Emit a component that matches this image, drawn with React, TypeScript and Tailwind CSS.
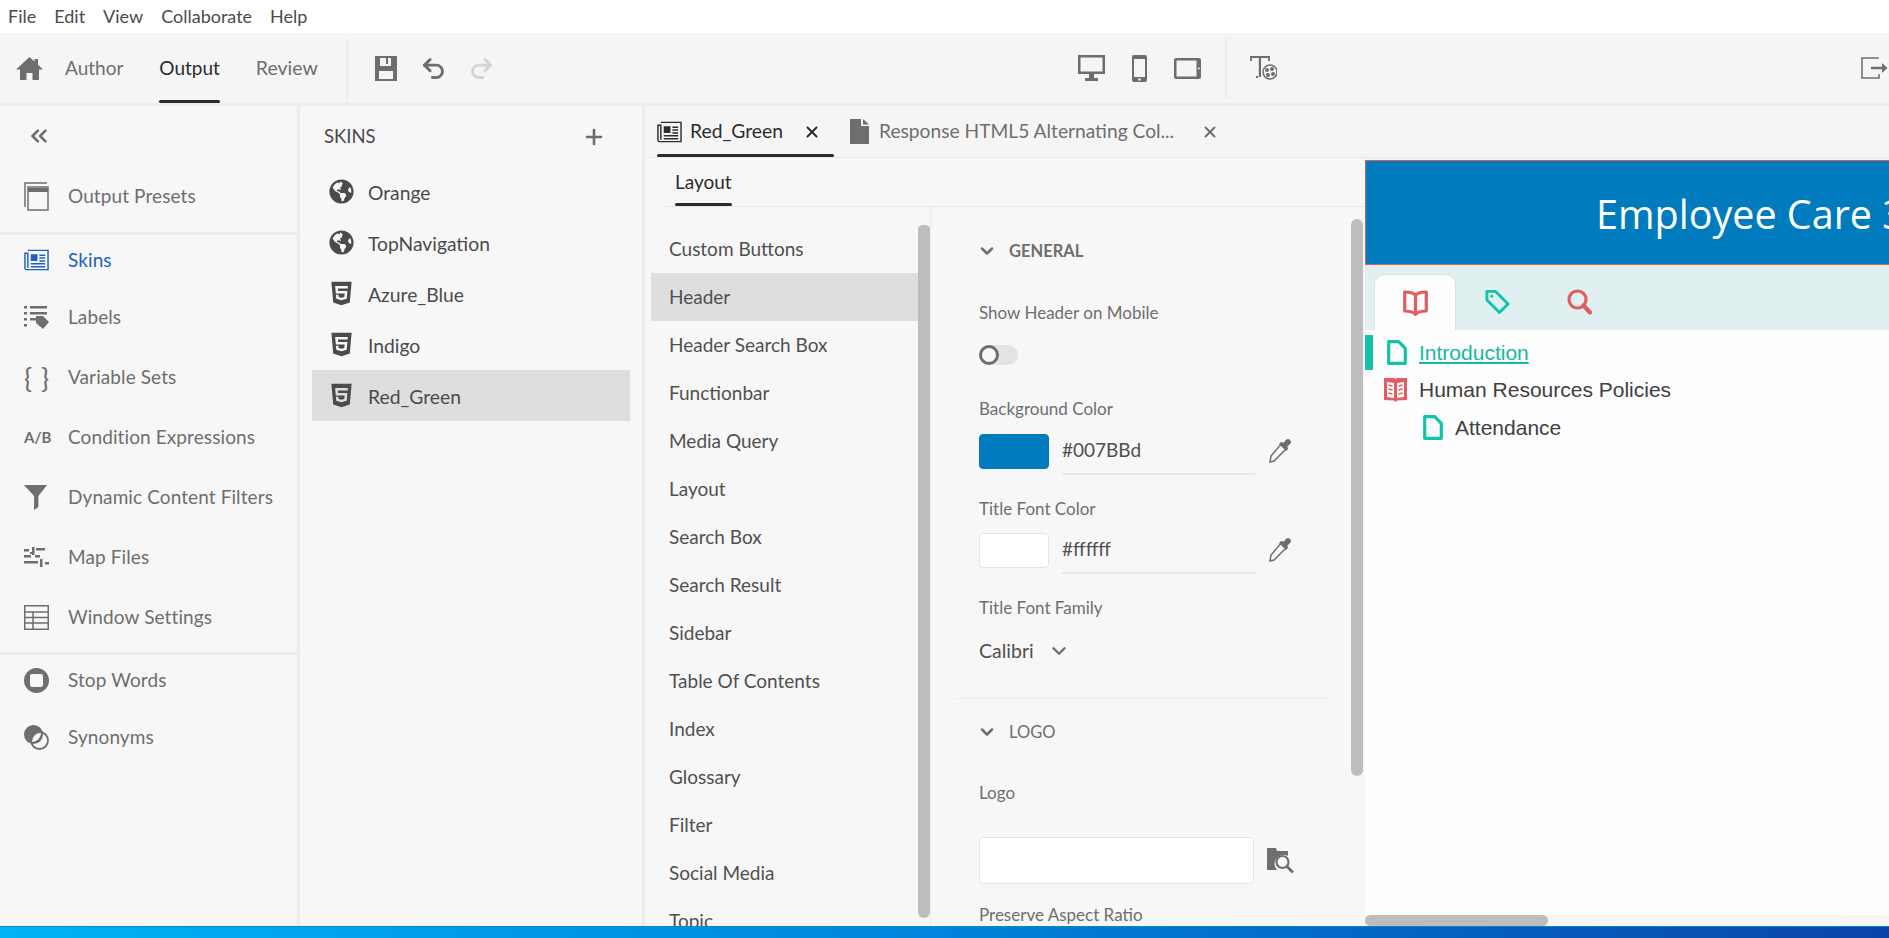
import type { ReactNode } from 'react'
import { ChevronDown, ChevronsLeft, Plus, Redo2, Undo2, X } from 'lucide-react'
import { FaGlobeAmericas, FaHtml5 } from 'react-icons/fa'

const menus = ['File', 'Edit', 'View', 'Collaborate', 'Help']
const skins = ['Orange', 'TopNavigation', 'Azure_Blue', 'Indigo', 'Red_Green']
const sections = [
  'Custom Buttons',
  'Header',
  'Header Search Box',
  'Functionbar',
  'Media Query',
  'Layout',
  'Search Box',
  'Search Result',
  'Sidebar',
  'Table Of Contents',
  'Index',
  'Glossary',
  'Filter',
  'Social Media',
  'Topic',
]

function HomeIcon() {
  return (
    <svg viewBox="0 0 27 23" className="w-[27px] h-[23px] fill-[#6e6e6e]">
      <path d="M13.5 0 0 12.5h4V23h6.5v-7h6v7H23V12.5h4l-5-4.7V2h-3.5v2.5z" />
    </svg>
  )
}

function SaveIcon() {
  return (
    <svg viewBox="0 0 22 25" className="w-[22px] h-[25px] fill-[#6e6e6e]">
      <path
        fillRule="evenodd"
        d="M0 0h22v25H0zM5 2v8h11V2h-3v6h-2V2zM4 15v8h14v-8z"
      />
    </svg>
  )
}

function PresetsIcon() {
  return (
    <svg viewBox="0 0 25 29" className="w-[25px] h-[29px] fill-none stroke-[#6e6e6e]">
      <path d="M1 25V1h22" strokeWidth="1.5" />
      <rect x="4" y="5" width="20" height="23" strokeWidth="1.5" />
      <path d="M4 8h20" strokeWidth="4" />
    </svg>
  )
}

function NewsIcon({ color }: { color: string }) {
  return (
    <svg viewBox="0 0 26 22" className="w-[25px] h-[22px]" fill="none" stroke={color}>
      <path d="M4 1h21v20H2.5A1.5 1.5 0 0 1 1 19.5V4h3v15" strokeWidth="1.5" />
      <rect x="7" y="5" width="7" height="7" fill={color} stroke="none" />
      <path d="M16 6h6M16 9h6M16 12h6M7 15h15M7 18h15" strokeWidth="1.6" />
    </svg>
  )
}

function LabelsIcon() {
  return (
    <svg viewBox="0 0 25 24" className="w-[25px] h-[24px] fill-[#6e6e6e]">
      <path d="M0 1h3v2.500H0zM6 1h17v2.500H6zM0 7h3v2.500H0zM6 7h17v2.500H6zM0 13h3v2.500H0zM6 13h7v2.500H6zM0 19h3v2.500H0z" />
      <path d="M12 11h7l6 6-6 7-7-6z" />
    </svg>
  )
}

function FilterIcon() {
  return (
    <svg viewBox="0 0 24 26" className="w-[23px] h-[25px] fill-[#6e6e6e]">
      <path d="M0 0h24l-9 11.500V23l-4.500 3V11.500z" />
    </svg>
  )
}

function MapIcon() {
  return (
    <svg viewBox="0 0 25 20" className="w-[25px] h-[20px] fill-[#6e6e6e]">
      <path d="M0 2h5v2.500H0zM8 0h2.500v8H8zM12 1h9v2.500h-9zM0 8h7v2.500H0zM11 8h5v2.500h-5zM0 14h14v2.500H0zM16 12h2.500v8H16zM21 15h4v2.500h-4zM6 5h2v2H6z" />
    </svg>
  )
}

function GridIcon() {
  return (
    <svg viewBox="0 0 25 25" className="w-[25px] h-[25px] fill-none stroke-[#6e6e6e]">
      <rect x="0.75" y="0.75" width="23.5" height="23.5" strokeWidth="1.5" />
      <path d="M1 7h23M1 12.500h23M1 18h23M9 7v17" strokeWidth="1.5" />
    </svg>
  )
}

function StopIcon() {
  return (
    <svg viewBox="0 0 25 25" className="w-[25px] h-[25px] fill-[#6e6e6e]">
      <path
        fillRule="evenodd"
        d="M12.500 0a12.500 12.500 0 1 1 0 25 12.500 12.500 0 0 1 0-25zM8 6a2 2 0 0 0-2 2v9a2 2 0 0 0 2 2h9a2 2 0 0 0 2-2V8a2 2 0 0 0-2-2z"
      />
    </svg>
  )
}

function SynonymsIcon() {
  return (
    <svg viewBox="0 0 25 25" className="w-[25px] h-[25px]">
      <circle cx="9.500" cy="9.500" r="9.500" fill="#6e6e6e" />
      <circle cx="15.500" cy="15.500" r="8.500" fill="none" stroke="#6e6e6e" strokeWidth="1.800" />
      <path d="M8 17a8.500 8.500 0 0 1 9-9 9 9 0 0 1-9 9z" fill="#f7f7f7" />
    </svg>
  )
}

function DocIcon() {
  return (
    <svg viewBox="0 0 19 25" className="w-[19px] h-[25px] fill-[#6e6e6e]">
      <path d="M0 0h11v7h8v18H0zM13 0l6 5.500h-6z" />
    </svg>
  )
}

function DesktopIcon() {
  return (
    <svg viewBox="0 0 27 26" className="w-[27px] h-[26px] fill-[#6e6e6e]">
      <path fillRule="evenodd" d="M0 0h27v19H0zM2.500 2.500v14h22v-14zM11 19h5v4h4v3H7v-3h4z" />
    </svg>
  )
}

function PhoneIcon() {
  return (
    <svg viewBox="0 0 15 27" className="w-[15px] h-[27px] fill-[#6e6e6e]">
      <path
        fillRule="evenodd"
        d="M2 0h11a2 2 0 0 1 2 2v23a2 2 0 0 1-2 2H2a2 2 0 0 1-2-2V2a2 2 0 0 1 2-2zM2 4v18h11V4zM7.500 23.200a1.300 1.300 0 1 0 0 2.600 1.300 1.300 0 0 0 0-2.600z"
      />
    </svg>
  )
}

function TabletIcon() {
  return (
    <svg viewBox="0 0 27 21" className="w-[27px] h-[21px] fill-[#6e6e6e]">
      <path
        fillRule="evenodd"
        d="M2 0h23a2 2 0 0 1 2 2v17a2 2 0 0 1-2 2H2a2 2 0 0 1-2-2V2a2 2 0 0 1 2-2zM2.500 2.500v16h20v-16zM24.800 9.500a1 1 0 1 0 0 2 1 1 0 0 0 0-2z"
      />
    </svg>
  )
}

function ThemeIcon() {
  return (
    <svg viewBox="0 0 27 24" className="w-[27px] h-[24px]">
      <path d="M0 0h20v5h-1.800V2H11v19H8.800V2H1.800v3H0z" fill="#6e6e6e" />
      <circle cx="20" cy="16" r="7" fill="none" stroke="#6e6e6e" strokeWidth="1.500" />
      <circle cx="17" cy="14" r="2" fill="#6e6e6e" />
      <circle cx="22" cy="13" r="2" fill="#6e6e6e" />
      <circle cx="18" cy="19" r="2" fill="#6e6e6e" />
      <circle cx="23" cy="18" r="2" fill="#6e6e6e" />
      <rect x="6" y="20" width="2" height="2" fill="#6e6e6e" />
    </svg>
  )
}

function ExportIcon() {
  return (
    <svg viewBox="0 0 27 22" className="w-[27px] h-[22px] fill-none stroke-[#6e6e6e]">
      <path d="M18 1H1v20h17v-4" strokeWidth="1.500" />
      <path d="M10 11h14" strokeWidth="2.500" />
      <path d="M21 6l5.500 5-5.500 5z" fill="#6e6e6e" stroke="none" />
    </svg>
  )
}

function DropperIcon() {
  return (
    <svg viewBox="0 0 26 27" className="w-[26px] h-[27px]">
      <path d="M16 5l5 5L8 23l-4 1 1-6z" fill="none" stroke="#6e6e6e" strokeWidth="1.500" />
      <path d="M13 6l7 7 2-2-1-2 3-3a2.500 2.500 0 0 0-4-4l-3 3-2-1z" fill="#6e6e6e" />
    </svg>
  )
}

function FolderSearchIcon() {
  return (
    <svg viewBox="0 0 27 26" className="w-[27px] h-[26px]">
      <path d="M0 0h9l1 3h11v5a9 9 0 0 0-11 14H0z" fill="#6e6e6e" />
      <circle cx="15.500" cy="14" r="6" fill="none" stroke="#6e6e6e" strokeWidth="2.200" />
      <path d="M20 18.500l6 6" stroke="#6e6e6e" strokeWidth="2.800" />
    </svg>
  )
}

function TocDoc({ className }: { className?: string }) {
  return (
    <svg viewBox="0 0 20 25" className={`w-[20px] h-[25px] fill-none stroke-[#14c2ac] ${className ?? ''}`}>
      <path d="M1.700 1.700h10l6.600 6.600v15h-16.600z" strokeWidth="3.200" strokeLinejoin="round" />
    </svg>
  )
}

function BookOpenIcon() {
  return (
    <svg viewBox="0 0 25 26" className="w-[25px] h-[26px] fill-none stroke-[#e05e63]">
      <path
        d="M12.500 5C10 2.500 6 2 1.700 2v19c4 0 8 .5 10.800 3.300C15.300 21.500 19 21 23.300 21V2C19 2 15 2.500 12.500 5zM12.500 5v19"
        strokeWidth="3.200"
        strokeLinejoin="round"
      />
    </svg>
  )
}

function TagIcon() {
  return (
    <svg viewBox="0 0 26 26" className="w-[25px] h-[26px] fill-none stroke-[#14c2ac]">
      <path d="M2 2h9l13 13-9 9L2 11z" strokeWidth="3" strokeLinejoin="round" />
      <circle cx="7" cy="7" r="1.500" fill="#14c2ac" stroke="none" />
    </svg>
  )
}

function SearchIcon() {
  return (
    <svg viewBox="0 0 25 26" className="w-[25px] h-[26px] fill-none stroke-[#e05e63]">
      <circle cx="10.500" cy="10.500" r="8.500" strokeWidth="3.200" />
      <path d="M16.500 16.500l6.500 7" strokeWidth="4.200" strokeLinecap="round" />
    </svg>
  )
}

function FilledBookIcon() {
  return (
    <svg viewBox="0 0 23 24" className="w-[23px] h-[24px]">
      <path
        fillRule="evenodd"
        d="M0 0h10l1.500 1L13 0h10v22l-10 .5-1.500 1.500-1.500-1.500L0 22zM3 4v15l7 1V5zM13 5v15l7-1V4z"
        fill="#e05e63"
      />
      <path d="M4.500 7l4 1M4.500 11l4 1M4.500 15l4 1M18.500 7l-4 1M18.500 11l-4 1M18.500 15l-4 1" stroke="#e05e63" strokeWidth="1.500" />
    </svg>
  )
}

function NavRow({
  icon,
  label,
  height,
  active,
}: {
  icon: ReactNode
  label: string
  height: string
  active?: boolean
}) {
  return (
    <div className={`flex items-center ${height}`}>
      <div className="w-[68px] pl-[24px] shrink-0 flex items-center">{icon}</div>
      <span className={`pt-[1px] text-[19px] tracking-[0.1px] ${active ? 'text-[#1e5fbf]' : 'text-[#6e6e6e]'}`}>{label}</span>
    </div>
  )
}

function Divider() {
  return <div className="h-[3px] bg-[#ececec]" />
}

function FieldLabel({ children, className }: { children: ReactNode; className: string }) {
  return <div className={`h-[24px] flex items-center text-[17px] text-[#6e6e6e] ${className}`}>{children}</div>
}

function SectionTitle({ children, bold, className }: { children: ReactNode; bold?: boolean; className: string }) {
  return (
    <div className={`h-[20px] flex items-center text-[#6e6e6e] ${className}`}>
      <ChevronDown size={20} strokeWidth={3} className="-ml-[2px] mr-[12px]" />
      <span className={`text-[16.5px] ${bold ? 'font-bold' : ''}`}>{children}</span>
    </div>
  )
}

function ColorField({ value, swatch, className }: { value: string; swatch: string; className: string }) {
  return (
    <div className={`flex items-start ${className}`}>
      <div className={`w-[70px] h-[35px] rounded-[4px] border ${swatch}`} />
      <div className="ml-[13px] w-[193px] h-[41px] pb-[7px] border-b-2 border-[#e8e8e8] flex items-center text-[19px] text-[#505050]">
        {value}
      </div>
      <div className="ml-[11px] mt-[4px]">
        <DropperIcon />
      </div>
    </div>
  )
}

export default function App() {
  return (
    <div className="w-full h-screen flex flex-col overflow-hidden bg-[#f7f7f7] font-['Lato',sans-serif]">
      <div className="h-[33px] bg-white flex items-center pl-[8px] gap-[18px] text-[18px] text-[#4b4b4b] shrink-0">
        {menus.map(m => (
          <span key={m}>{m}</span>
        ))}
      </div>

      <div className="h-[70px] bg-[#f5f5f5] flex items-center shrink-0 relative">
        <div className="pl-[16px] pr-[22px]">
          <HomeIcon />
        </div>
        <span className="text-[19px] text-[#6e6e6e]">Author</span>
        <div className="relative ml-[36px] h-full flex items-center text-[19px] text-[#2c2c2c]">
          Output
          <div className="absolute left-0 right-0 bottom-0 h-[3px] rounded-sm bg-[#2c2c2c]" />
        </div>
        <span className="ml-[36px] text-[19.5px] text-[#6e6e6e]">Review</span>
        <div className="ml-[28px] w-[2px] h-[64px] mt-[6px] bg-[#ebebeb]" />
        <div className="ml-[27px]">
          <SaveIcon />
        </div>
        <Undo2 size={27} strokeWidth={2.6} className="ml-[23px] text-[#6e6e6e]" />
        <Redo2 size={27} strokeWidth={2.6} className="ml-[21px] text-[#d4d4d4]" />
        <div className="ml-[583px]">
          <DesktopIcon />
        </div>
        <div className="ml-[27px]">
          <PhoneIcon />
        </div>
        <div className="ml-[27px]">
          <TabletIcon />
        </div>
        <div className="ml-[24px] w-[2px] h-[60px] bg-[#ebebeb]" />
        <div className="ml-[23px]">
          <ThemeIcon />
        </div>
        <div className="ml-auto mr-[1px]">
          <ExportIcon />
        </div>
      </div>
      <Divider />

      <div className="flex-1 min-h-0 flex">
        <div className="w-[300px] shrink-0 border-r-[3px] border-[#ececec]">
          <div className="h-[60px] flex items-center pl-[26px] text-[#6e6e6e]">
            <ChevronsLeft size={26} strokeWidth={2.4} />
          </div>
          <NavRow icon={<PresetsIcon />} label="Output Presets" height="h-[60px]" />
          <div className="mt-[6px]">
            <Divider />
          </div>
          <NavRow icon={<NewsIcon color="#1e5fbf" />} label="Skins" height="h-[50px] mb-[2px]" active />
          <NavRow icon={<LabelsIcon />} label="Labels" height="h-[60px]" />
          <NavRow
            icon={<span className="text-[27px] leading-none tracking-[1px] text-[#6e6e6e]">{'{ }'}</span>}
            label="Variable Sets"
            height="h-[60px]"
          />
          <NavRow
            icon={<span className="text-[15px] font-bold text-[#6e6e6e]">A/B</span>}
            label="Condition Expressions"
            height="h-[60px]"
          />
          <NavRow icon={<FilterIcon />} label="Dynamic Content Filters" height="h-[60px]" />
          <NavRow icon={<MapIcon />} label="Map Files" height="h-[60px]" />
          <NavRow icon={<GridIcon />} label="Window Settings" height="h-[60px]" />
          <div className="mt-[5px]">
            <Divider />
          </div>
          <NavRow icon={<StopIcon />} label="Stop Words" height="h-[50px]" />
          <NavRow icon={<SynonymsIcon />} label="Synonyms" height="h-[64px]" />
        </div>

        <div className="w-[345px] shrink-0 border-r-[3px] border-[#ececec]">
          <div className="h-[60px] pt-[2px] flex items-center justify-between pl-[24px] pr-[36px] text-[#4b4b4b]">
            <span className="text-[18.5px]">SKINS</span>
            <Plus size={24} strokeWidth={2.6} className="text-[#6e6e6e]" />
          </div>
          {skins.map((s, i) => (
            <div
              key={s}
              className={`ml-[12px] w-[318px] h-[51px] flex items-center pl-[17px] ${s === 'Red_Green' ? 'bg-[#dedede]' : ''}`}
            >
              <div className="w-[39px] shrink-0 text-[#4b4b4b]">
                {i < 2 ? <FaGlobeAmericas size={25} /> : <FaHtml5 size={27} className="-ml-[1px]" />}
              </div>
              <span className="pt-[3px] text-[19.3px] text-[#4b4b4b]">{s}</span>
            </div>
          ))}
        </div>

        <div className="flex-1 min-w-0 flex flex-col">
          <div className="h-[52px] border-b border-[#e8e8e8] flex shrink-0 pl-[12px] bg-[#f5f5f5]">
            <div className="relative w-[177px] flex items-center text-[#2c2c2c]">
              <NewsIcon color="#2c2c2c" />
              <span className="ml-[8px] text-[19.3px]">Red_Green</span>
              <X size={18} strokeWidth={2.6} className="ml-[20px]" />
              <div className="absolute left-0 right-0 bottom-0 h-[3px] rounded-sm bg-[#2c2c2c]" />
            </div>
            <div className="ml-[16px] flex items-center text-[#6e6e6e]">
              <DocIcon />
              <span className="ml-[10px] w-[296px] text-[19.2px] whitespace-nowrap">
                Response HTML5 Alternating Col...
              </span>
              <X size={18} strokeWidth={2.6} className="ml-[26px]" />
            </div>
          </div>

          <div className="flex-1 min-h-0 flex">
            <div className="w-[720px] shrink-0 flex flex-col">
              <div className="h-[49px] ml-[18px] border-b border-[#e8e8e8] pl-[12px] shrink-0">
                <div className="relative w-fit h-full flex items-center text-[19px] text-[#2c2c2c]">
                  Layout
                  <div className="absolute left-0 right-0 bottom-0 h-[3px] rounded-sm bg-[#2c2c2c]" />
                </div>
              </div>

              <div className="flex-1 min-h-0 flex overflow-hidden">
                <div className="w-[273px] pl-[6px] pt-[18px] shrink-0">
                  {sections.map(s => (
                    <div
                      key={s}
                      className={`h-[48px] flex items-center pl-[18px] text-[19px] text-[#505050] ${s === 'Header' ? 'bg-[#dedede]' : ''}`}
                    >
                      {s}
                    </div>
                  ))}
                </div>
                <div className="w-[12px] h-[693px] mt-[18px] shrink-0 rounded-t-[6px] rounded-b-[8px] bg-[#bdbdbd]" />
                <div className="flex-1 min-w-0 border-l border-[#ececec] pl-[48px] relative">
                  <SectionTitle bold className="mt-[34px]">GENERAL</SectionTitle>
                  <FieldLabel className="mt-[40px]">Show Header on Mobile</FieldLabel>
                  <div className="mt-[20px] w-[39px] h-[20px] rounded-full bg-[#e3e3e3] relative">
                    <div className="w-[20px] h-[20px] rounded-full border-[3px] border-[#6e6e6e] bg-[#f7f7f7]" />
                  </div>
                  <FieldLabel className="mt-[32px]">Background Color</FieldLabel>
                  <ColorField value="#007BBd" swatch="bg-[#007bbd] border-[#007bbd]" className="mt-[13px]" />
                  <FieldLabel className="mt-[22px]">Title Font Color</FieldLabel>
                  <ColorField value="#ffffff" swatch="bg-white border-[#e4e4e4]" className="mt-[12px]" />
                  <FieldLabel className="mt-[22px]">Title Font Family</FieldLabel>
                  <div className="mt-[19px] h-[24px] flex items-center text-[19.5px] text-[#505050]">
                    Calibri
                    <ChevronDown size={22} strokeWidth={2.6} className="ml-[14px] text-[#6e6e6e]" />
                  </div>
                  <div className="mt-[35px] -ml-[24px] w-[372px] h-px bg-[#ebebeb]" />
                  <SectionTitle className="mt-[23px]">LOGO</SectionTitle>
                  <FieldLabel className="mt-[39px]">Logo</FieldLabel>
                  <div className="mt-[32px] flex items-center">
                    <div className="w-[275px] h-[47px] rounded-[4px] border border-[#e4e4e4] bg-white" />
                    <div className="ml-[13px]">
                      <FolderSearchIcon />
                    </div>
                  </div>
                  <FieldLabel className="mt-[19px]">Preserve Aspect Ratio</FieldLabel>
                  <div className="absolute right-[2px] top-[12px] w-[12px] h-[557px] rounded-[6px] bg-[#bdbdbd]" />
                </div>
              </div>
            </div>

            <div className="flex-1 min-w-0 bg-[#fdfdfd] flex flex-col relative overflow-hidden">
              <div className="h-[2px] bg-[#f5f5f5] shrink-0" />
              <div className="h-[105px] shrink-0 bg-[#007bbd] border-y border-l border-[#d9605a] pl-[230px] pt-[5px] flex items-center overflow-hidden">
                <span className="text-[39.5px] text-white whitespace-nowrap font-['Open_Sans',sans-serif]">
                  Employee Care 3.0
                </span>
              </div>
              <div className="h-[65px] shrink-0 bg-[#e0f0f0] flex items-end pl-[9px]">
                <div className="w-[82px] h-[56px] bg-[#fdfdfd] border border-b-0 border-[#d8e2e2] rounded-t-[10px] flex items-center justify-center">
                  <BookOpenIcon />
                </div>
                <div className="w-[82px] h-[56px] flex items-center justify-center">
                  <TagIcon />
                </div>
                <div className="w-[82px] h-[56px] flex items-center justify-center">
                  <SearchIcon />
                </div>
              </div>
              <div className="mt-[5px] font-['Liberation_Sans',sans-serif] text-[21px] text-[#404040]">
                <div className="h-[35px] flex items-center">
                  <div className="w-[8px] h-full bg-[#14c2ac]" />
                  <TocDoc className="ml-[14px]" />
                  <span className="ml-[12px] text-[#17b8a0] underline">Introduction</span>
                </div>
                <div className="h-[39px] flex items-center pl-[19px]">
                  <FilledBookIcon />
                  <span className="ml-[12px]">Human Resources Policies</span>
                </div>
                <div className="h-[37px] flex items-center pl-[58px]">
                  <TocDoc />
                  <span className="ml-[12px]">Attendance</span>
                </div>
              </div>
              <div className="absolute left-0 right-0 bottom-0 h-[11px] bg-[#f7f7f7]">
                <div className="w-[183px] h-full rounded-full bg-[#bdbdbd]" />
              </div>
            </div>
          </div>
        </div>
      </div>

      <div className="h-[12px] shrink-0 border-t border-[#0c86b8] bg-linear-to-r from-[#00b4f5] via-[#0083dc] to-[#0a45a8]" />
    </div>
  )
}
